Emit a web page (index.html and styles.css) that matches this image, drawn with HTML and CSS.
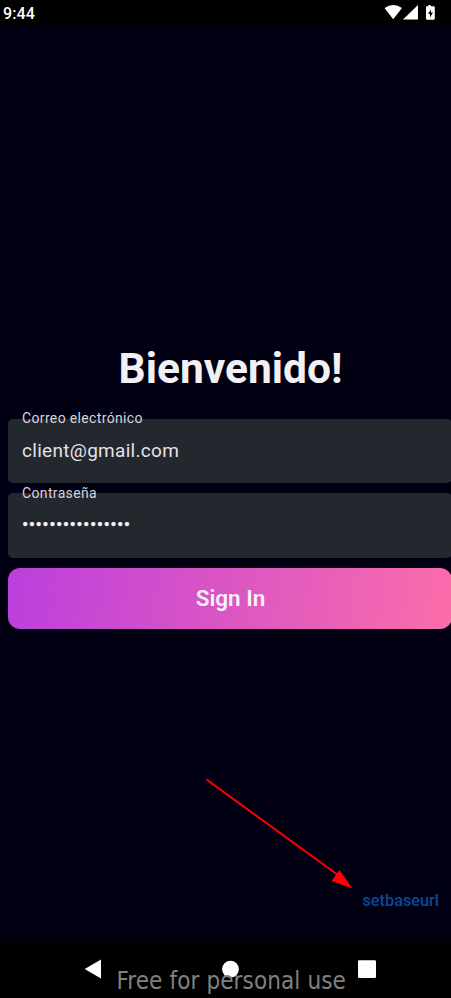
FILE: index.html
```html
<!DOCTYPE html>
<html lang="es">
<head>
<meta charset="utf-8">
<title>Bienvenido</title>
<link rel="stylesheet" href="styles.css">
</head>
<body>
<div class="screen">
  <header class="status">
    <span class="clock">9:44</span>
    <svg class="status-icons" width="54" height="20" viewBox="0 0 54 20" fill="#fff">
      <path d="M-.5 8Q8.2 1.8 17 8L8.2 19.2Z"/>
      <path d="M33 5V19.6H18Z"/>
      <path fill-rule="evenodd" d="M43.3 5H45.7V6.3H48.6Q49.8 6.3 49.8 7.3V18.6Q49.8 19.7 48.6 19.7H42Q41 19.7 41 18.6V7.3Q41 6.3 42 6.3H43.3ZM46 9.4L43 14H45V17.6L48 12.6H46Z"/>
    </svg>
  </header>
  <main class="content">
    <h1 class="title">Bienvenido!</h1>
    <form class="form">
      <div class="field">
        <span class="label">Correo electrónico</span>
        <span class="value">client@gmail.com</span>
      </div>
      <div class="field">
        <span class="label">Contraseña</span>
        <span class="value password">••••••••••••••••</span>
      </div>
      <button class="submit" type="button">Sign In</button>
    </form>
    <a class="base-link">setbaseurl</a>
    <svg class="arrow" width="150" height="112" viewBox="0 0 150 112">
      <path d="M1.5 1.5L137 100" stroke="#f00" stroke-width="2" fill="none"/>
      <path d="M147.5 110.5L134.5 92L126.5 103Z" fill="#f00"/>
    </svg>
  </main>
  <nav class="navbar">
    <svg class="nav-icons" width="451" height="56" viewBox="0 0 451 56" fill="#fff">
      <path d="M84.7 27L101 17.4V36.6Z"/>
      <circle cx="230.5" cy="27.2" r="8.4"/>
      <rect x="358" y="18.2" width="18" height="17.8" rx="1.2"/>
    </svg>
    <span class="watermark">Free for personal use</span>
  </nav>
</div>
</body>
</html>
```
FILE: styles.css
```css
* { box-sizing: border-box; }

body {
  margin: 0;
  background: #000;
  font-family: Roboto, sans-serif;
}

.screen {
  display: flex;
  flex-direction: column;
  width: 451px;
  height: 998px;
  overflow: hidden;
}

.status {
  display: flex;
  justify-content: space-between;
  height: 26px;
  padding: 0 12px 0 3px;
  background: #000;
  color: #fff;
}

.status-icons { overflow: visible; }

.clock {
  font-size: 16px;
  font-weight: 500;
  line-height: 27px;
  letter-spacing: 0.15px;
}

.content {
  position: relative;
  display: flex;
  flex-direction: column;
  height: 916px;
  padding: 318px 0 0 8px;
  background: #000012;
}

.title {
  margin: 0 0 24.6px;
  padding-left: 2px;
  color: #f3f0f2;
  font-size: 42.5px;
  font-weight: 700;
  line-height: 50px;
  text-align: center;
}

.form {
  display: flex;
  flex-direction: column;
  gap: 10px;
  width: 444px;
}

.field {
  display: flex;
  flex-direction: column;
  height: 64.5px;
  padding-left: 14px;
  border-radius: 5px;
  background: #23272e;
  color: #e6e1e5;
}

.label {
  margin-top: -9.5px;
  color: #d8d4d9;
  font-size: 14px;
  line-height: 18px;
  letter-spacing: 0.35px;
}

.value {
  margin-top: 11.5px;
  font-size: 19px;
  line-height: 24px;
  letter-spacing: 0.3px;
}

.password {
  color: #f5f0f4;
  letter-spacing: 0.38px;
  -webkit-text-stroke: 0.3px #f5f0f4;
}

.submit {
  height: 61.5px;
  padding: 0 0 0 1px;
  border: 0;
  border-radius: 12px;
  background: linear-gradient(98deg, #bb3fdd, #fb6da9);
  color: #f8f0fb;
  font: 600 22.5px/60px Roboto, sans-serif;
}

.base-link {
  align-self: flex-end;
  margin: 261.6px 12px 0 0;
  color: #0648a0;
  font-size: 16.3px;
  font-weight: 500;
  line-height: 20px;
}

.arrow {
  position: absolute;
  top: 752px;
  left: 205px;
}

.navbar {
  position: relative;
  height: 56px;
  background: #000;
}

.nav-icons { display: block; }

.watermark {
  position: absolute;
  top: 23px;
  left: 116.5px;
  color: #808080;
  font: 24px/32px "DejaVu Sans Condensed", "DejaVu Sans", sans-serif;
  letter-spacing: 0.1px;
  white-space: nowrap;
}
```
